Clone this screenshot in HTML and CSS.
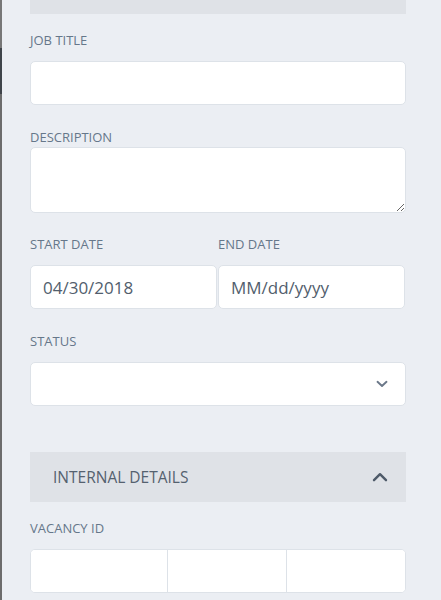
FILE: index.html
```html
<!DOCTYPE html>
<html lang="en">
<head>
<meta charset="utf-8">
<title>Job form</title>
<link rel="stylesheet" href="styles.css">
</head>
<body>
<div class="page">
  <div class="edge">
    <div class="edge-top"></div>
    <div class="edge-dark"></div>
    <div class="edge-rest"></div>
  </div>
  <main class="panel">
    <div class="bar-top"></div>

    <div class="field first">
      <label class="label">JOB TITLE</label>
      <input class="input" type="text">
    </div>

    <div class="field">
      <label class="label tight">DESCRIPTION</label>
      <textarea class="textarea"></textarea>
    </div>

    <div class="field row dates">
      <div class="col">
        <label class="label">START DATE</label>
        <input class="input date" type="text" value="04/30/2018">
      </div>
      <div class="col">
        <label class="label">END DATE</label>
        <input class="input date" type="text" placeholder="MM/dd/yyyy">
      </div>
    </div>

    <div class="field">
      <label class="label">STATUS</label>
      <div class="select">
        <svg class="chev-down" width="12" height="8" viewBox="0 0 12 8"><path d="M1.5 1.8 L6 6 L10.5 1.8" fill="none" stroke="#6b7889" stroke-width="1.9" stroke-linecap="round" stroke-linejoin="round"/></svg>
      </div>
    </div>

    <div class="section-head">
      <span class="section-title">INTERNAL DETAILS</span>
      <svg class="chev-up" width="16" height="10" viewBox="0 0 16 10"><path d="M2 8.2 L8 2.2 L14 8.2" fill="none" stroke="#4e5a69" stroke-width="2.4" stroke-linecap="round" stroke-linejoin="round"/></svg>
    </div>

    <div class="field after-head">
      <label class="label">VACANCY ID</label>
      <div class="segments">
        <input class="seg seg-wide" type="text">
        <input class="seg" type="text">
        <input class="seg seg-last" type="text">
      </div>
    </div>
  </main>
</div>
</body>
</html>
```

FILE: styles.css
```css
* { box-sizing: border-box; }
html, body { margin: 0; padding: 0; }
body {
  background: #ebeef3;
  font-family: "Open Sans", "Noto Sans", sans-serif;
  width: 441px;
  height: 600px;
  overflow: hidden;
}
.page {
  display: flex;
  height: 600px;
}
.edge {
  width: 2px;
  display: flex;
  flex-direction: column;
}
.edge-top { height: 48px; background: #777777; }
.edge-dark { height: 46px; background: #3f444a; }
.edge-rest { flex: 1; background: #6c6c6c; }

.panel {
  padding-left: 28px;
  width: 404px;
  display: flex;
  flex-direction: column;
}
.bar-top {
  height: 14px;
  background: #dfe2e7;
}
.field { margin-top: 24px; }
.field.first { margin-top: 18px; }
.field.dates { margin-top: 23px; }
.field.after-head { margin-top: 18px; }

.label {
  display: block;
  font-size: 13px;
  line-height: 16px;
  color: #66778a;
  margin-bottom: 13px;
}
.label.tight { margin-bottom: 2px; }

.input, .textarea, .select {
  display: block;
  width: 376px;
  background: #ffffff;
  border: 1px solid #dde2e8;
  border-radius: 5px;
  outline: none;
  font-family: inherit;
}
.input {
  height: 44px;
  padding: 0 12px;
  font-size: 17px;
  color: #525e6d;
}
.input::placeholder { color: #525e6d; opacity: 1; }
.textarea {
  height: 66px;
  resize: vertical;
  margin: 0;
}
.row {
  display: flex;
  gap: 1px;
}
.col { width: 187px; }
.input.date { width: 187px; }

.select {
  height: 44px;
  display: flex;
  align-items: center;
  justify-content: flex-end;
  padding-right: 17px;
}
.chev-down { display: block; }

.section-head {
  margin-top: 46px;
  height: 50px;
  width: 376px;
  background: #dfe2e7;
  display: flex;
  align-items: center;
  justify-content: space-between;
  padding: 0 18px 0 23px;
}
.section-title {
  font-size: 15.5px;
  color: #55616f;
}
.chev-up { display: block; }

.segments {
  display: flex;
  width: 376px;
  height: 44px;
  background: #ffffff;
  border: 1px solid #dde2e8;
  border-radius: 5px;
  overflow: hidden;
}
.seg {
  width: 119px;
  height: 100%;
  border: 0;
  border-left: 1px solid #dde2e8;
  background: #ffffff;
  outline: none;
  padding: 0;
}
.seg-wide {
  width: 136px;
  border-left: 0;
}
.seg-last { flex: 1; }
```
